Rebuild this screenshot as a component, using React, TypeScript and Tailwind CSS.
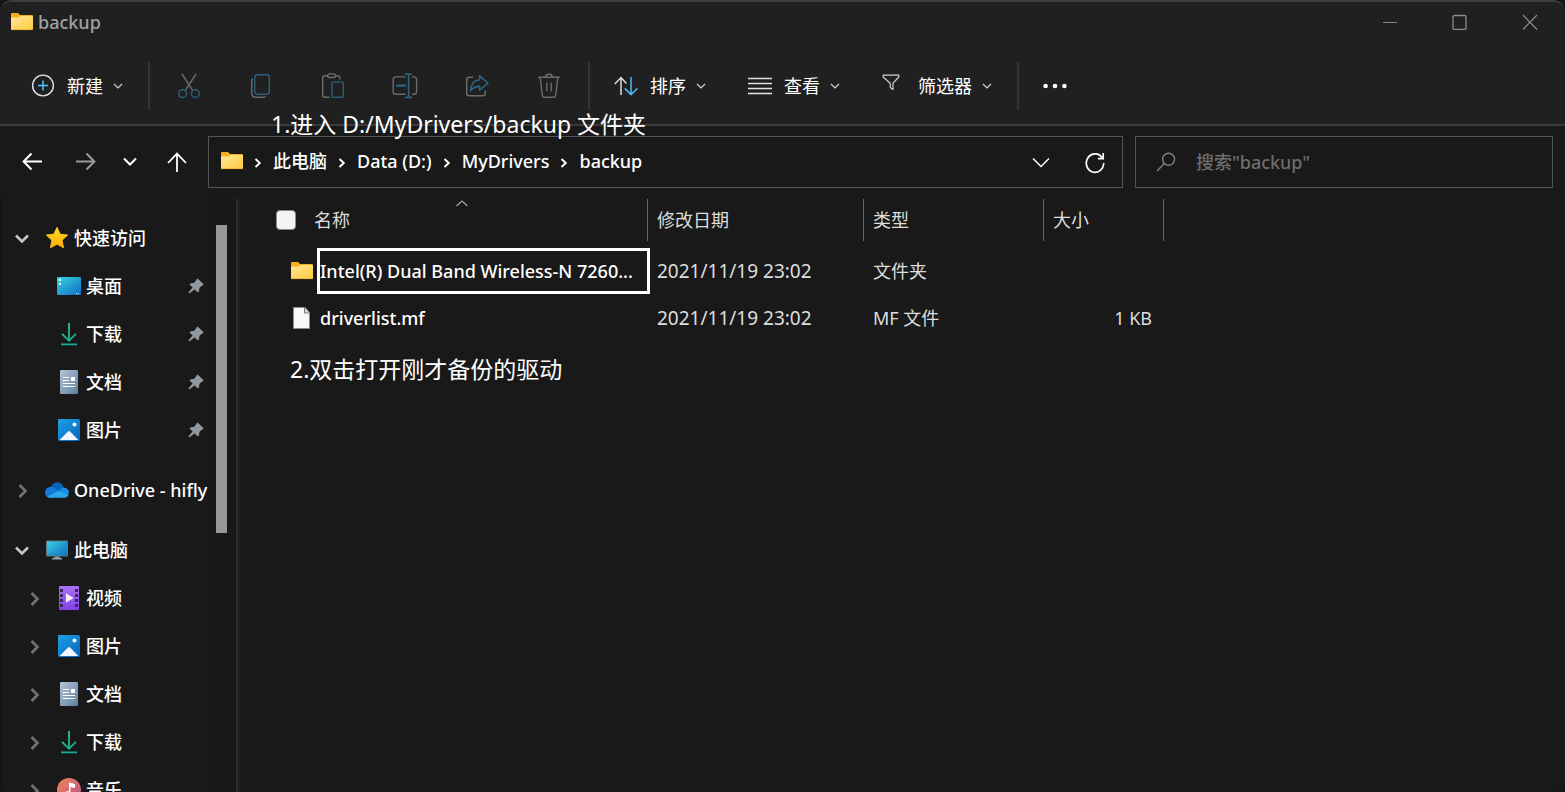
import type { ReactNode } from "react";

type IconProps = { className?: string };

function Folder({ className = "" }: IconProps) {
  return (
    <svg width="22" height="18" viewBox="0 0 22 18" className={`shrink-0 ${className}`} aria-hidden="true">
      <defs>
        <linearGradient id="folder" x1="0" y1="0" x2="1" y2="1">
          <stop offset="0" stopColor="#ffe69c" />
          <stop offset="1" stopColor="#ffcb3c" />
        </linearGradient>
      </defs>
      <path d="M0 .8Q0 0 .9 0H6.6Q7.2 0 7.6 .5L9 2H21Q22 2 22 3V8H0Z" fill="#f5b01a" />
      <path d="M0 4.4H7.4L9.4 3H22V16Q22 17 21 17H1Q0 17 0 16Z" fill="url(#folder)" />
      <path d="M.3 16.6H21.7" stroke="#eeb434" strokeWidth="1" />
    </svg>
  );
}

function PageFile() {
  return (
    <svg width="22" height="24" viewBox="0 0 22 24" className="shrink-0" aria-hidden="true">
      <path d="M2.5 1.5H14L18.5 6.5V22.5H2.5Z" fill="#f8f8f8" stroke="#8a8a8a" />
      <path d="M13.5 1.5V7H18.5" fill="#dcdcdc" stroke="#777" />
    </svg>
  );
}

function MiniChevron() {
  return (
    <svg width="10" height="8" viewBox="0 0 10 8" fill="none" stroke="#d0d0d0" strokeWidth="1.2" aria-hidden="true">
      <path d="M1 2L5 6L9 2" />
    </svg>
  );
}

function PlusCircle() {
  return (
    <svg width="24" height="24" viewBox="0 0 24 24" fill="none" aria-hidden="true">
      <circle cx="12" cy="11.5" r="10.4" stroke="#e0e0e0" strokeWidth="1.4" />
      <path d="M12 6.5V16.5M7 11.5H17" stroke="#4cc2ff" strokeWidth="1.5" />
    </svg>
  );
}

function Scissors() {
  return (
    <svg width="26" height="26" viewBox="0 0 26 26" fill="none" strokeWidth="1.4" aria-hidden="true">
      <path d="M6 1L16.6 17.4M20 1L9.4 17.4" stroke="#6c6c6c" />
      <circle cx="6.6" cy="20.6" r="3.9" stroke="#2d5f78" />
      <circle cx="19.4" cy="20.6" r="3.9" stroke="#2d5f78" />
    </svg>
  );
}

function CopyIcon() {
  return (
    <svg width="26" height="26" viewBox="0 0 26 26" fill="none" strokeWidth="1.4" aria-hidden="true">
      <path d="M4.7 5.5Q3.7 6.5 3.7 8V20Q3.7 24.3 8 24.3H15Q17 24.3 17.8 23.4" stroke="#6c6c6c" />
      <rect x="6.7" y="1.7" width="14.6" height="19.6" rx="2.6" stroke="#2d5f78" />
    </svg>
  );
}

function PasteIcon() {
  return (
    <svg width="26" height="26" viewBox="0 0 26 26" fill="none" strokeWidth="1.4" aria-hidden="true">
      <path d="M8 2.7H5Q2.7 2.7 2.7 5V22Q2.7 24.3 5 24.3H9.5M15 2.7H17.5Q19.8 2.7 19.8 5V6.5" stroke="#6c6c6c" />
      <rect x="7.7" y=".9" width="7.8" height="3.6" rx="1.8" stroke="#6c6c6c" />
      <rect x="11.9" y="8.9" width="11.4" height="15.4" rx="1.8" stroke="#2d5f78" />
    </svg>
  );
}

function RenameIcon() {
  return (
    <svg width="26" height="26" viewBox="0 0 26 26" fill="none" strokeWidth="1.4" aria-hidden="true">
      <path d="M13.5 3.9H4Q1.2 3.9 1.2 6.7V18.5Q1.2 21.3 4 21.3H13.5M20 3.9H21.8Q24.6 3.9 24.6 6.7V18.5Q24.6 21.3 21.8 21.3H20" stroke="#6c6c6c" />
      <path d="M4.2 12.6H13.8" stroke="#2d6684" strokeWidth="2.4" />
      <path d="M13 1.2H20M13 24.4H20M16.6 1.2V24.4" stroke="#2d6684" strokeWidth="1.6" />
    </svg>
  );
}

function ShareIcon() {
  return (
    <svg width="26" height="26" viewBox="0 0 26 26" fill="none" strokeWidth="1.4" strokeLinejoin="round" aria-hidden="true">
      <path d="M9 4.2H5.2Q2.7 4.2 2.7 6.7V20.3Q2.7 22.8 5.2 22.8H18.8Q21.3 22.8 21.3 20.3V17.5" stroke="#6c6c6c" />
      <path d="M15.6 2.8L24 10L15.6 17.2V13.4Q10.2 13.2 6.6 17.8Q7.2 7.4 15.6 6.8Z" stroke="#2d6684" strokeWidth="1.6" />
    </svg>
  );
}

function TrashIcon() {
  return (
    <svg width="26" height="26" viewBox="0 0 26 26" fill="none" stroke="#6c6c6c" strokeWidth="1.4" aria-hidden="true">
      <path d="M2.2 4.2H23.8M9.6 4Q9.8 1.2 13 1.2Q16.2 1.2 16.4 4M4.2 4.4L6.2 22Q6.5 24.3 8.8 24.3H17.2Q19.5 24.3 19.8 22L21.8 4.4M10.8 9.5V18.5M15.2 9.5V18.5" />
    </svg>
  );
}

function SortIcon() {
  return (
    <svg width="24" height="24" viewBox="0 0 24 24" fill="none" strokeWidth="1.5" aria-hidden="true">
      <path d="M7 21V4M.8 10L7 3.6L12.4 9.4" stroke="#dcdcdc" />
      <path d="M17 3V20M10.8 14.4L17 20.6L23.4 14.4" stroke="#4cb8f0" />
    </svg>
  );
}

function LinesIcon() {
  return (
    <svg width="24" height="24" viewBox="0 0 24 24" stroke="#e2e2e2" strokeWidth="1.3" aria-hidden="true">
      <path d="M0 4.5H24M0 9.5H24M0 14.5H24M0 19.5H24" />
    </svg>
  );
}

function FunnelIcon() {
  return (
    <svg width="18" height="24" viewBox="0 0 18 24" fill="none" stroke="#cfcfcf" strokeWidth="1.2" strokeLinejoin="round" aria-hidden="true">
      <path d="M1.2 1.2H16.8V3L11 9.2V15.4L8.2 13.4V9.2L1.2 3Z" />
    </svg>
  );
}

function DesktopIcon() {
  return (
    <svg width="24" height="18" viewBox="0 0 24 18" aria-hidden="true">
      <defs>
        <linearGradient id="screen" x1="0" y1="0" x2="1" y2="1">
          <stop offset="0" stopColor="#3ad3e0" />
          <stop offset="1" stopColor="#0f6cc4" />
        </linearGradient>
      </defs>
      <rect width="24" height="18" rx="1.2" fill="url(#screen)" />
      <path d="M2 2H4V4H2ZM2 6H4V8H2Z" fill="#fff" />
      <path d="M19 16H20V17H19ZM21 16H22V17H21Z" fill="#cfe8ff" />
    </svg>
  );
}

function DownloadIcon() {
  return (
    <svg width="18" height="24" viewBox="0 0 18 24" fill="none" strokeWidth="1.8" aria-hidden="true">
      <defs>
        <linearGradient id="down" gradientUnits="userSpaceOnUse" x1="2" y1="1" x2="16" y2="22">
          <stop offset="0" stopColor="#35d07f" />
          <stop offset="1" stopColor="#18a2a0" />
        </linearGradient>
      </defs>
      <path d="M9.01 1L9 18.5M2 11.8L9 18.8L16 11.8M1 22.4L17 22.41" stroke="url(#down)" />
    </svg>
  );
}

function DocumentIcon() {
  return (
    <svg width="18" height="24" viewBox="0 0 18 24" aria-hidden="true">
      <defs>
        <linearGradient id="doc" x1="0" y1="0" x2="1" y2="1">
          <stop offset="0" stopColor="#b4c6d6" />
          <stop offset="1" stopColor="#5f7d9e" />
        </linearGradient>
      </defs>
      <rect width="18" height="24" rx="1.2" fill="url(#doc)" />
      <path d="M3 7.5H9M3 10.5H9M3 13.5H15M3 16.5H15" stroke="#fff" />
      <rect x="11" y="7" width="4" height="4" fill="#fff" />
    </svg>
  );
}

function PictureIcon() {
  return (
    <svg width="22" height="22" viewBox="0 0 22 22" aria-hidden="true">
      <defs>
        <linearGradient id="pic" x1="0" y1="0" x2="1" y2="1">
          <stop offset="0" stopColor="#1ea0e6" />
          <stop offset="1" stopColor="#0a64b8" />
        </linearGradient>
      </defs>
      <rect width="22" height="22" rx="1.4" fill="url(#pic)" />
      <path d="M1.6 21L10 12.4Q11 11.6 12 12.4L20.4 21Z" fill="#eef6ff" />
      <circle cx="16.5" cy="5.5" r="2" fill="#fff" />
    </svg>
  );
}

function VideoIcon() {
  return (
    <svg width="20" height="24" viewBox="0 0 20 24" aria-hidden="true">
      <defs>
        <linearGradient id="vid" x1="0" y1="0" x2="0" y2="1">
          <stop offset="0" stopColor="#a972f4" />
          <stop offset="1" stopColor="#8240e6" />
        </linearGradient>
      </defs>
      <rect width="20" height="24" rx="1.2" fill="url(#vid)" />
      <path d="M1 3H4V6H1ZM1 8H4V11H1ZM1 13H4V16H1ZM1 18H4V21H1ZM16 3H19V6H16ZM16 8H19V11H16ZM16 13H19V16H16ZM16 18H19V21H16Z" fill="#3b2560" />
      <path d="M7 7.2L14.6 12L7 16.8Z" fill="#f4f0fa" />
    </svg>
  );
}

function MusicIcon() {
  return (
    <svg width="24" height="24" viewBox="0 0 24 24" aria-hidden="true">
      <defs>
        <linearGradient id="mus" x1="0" y1="0" x2="1" y2="1">
          <stop offset="0" stopColor="#f0894c" />
          <stop offset="1" stopColor="#b84e98" />
        </linearGradient>
      </defs>
      <circle cx="12" cy="12" r="12" fill="url(#mus)" />
      <path d="M12 4.5L18 6V10L13.4 9V16H12Z" fill="#fff" />
      <circle cx="10.6" cy="16" r="2.8" fill="#fff" />
    </svg>
  );
}

function StarIcon() {
  return (
    <svg width="24" height="24" viewBox="0 0 24 24" aria-hidden="true">
      <defs>
        <linearGradient id="star" x1="0" y1="0" x2="0" y2="1">
          <stop offset="0" stopColor="#ffda20" />
          <stop offset="1" stopColor="#ffae0c" />
        </linearGradient>
      </defs>
      <path
        d="M12 1.4L15.1 8.2L22.6 9.1L17.1 14.2L18.5 21.8L12 18.1L5.5 21.8L6.9 14.2L1.4 9.1L8.9 8.2Z"
        fill="url(#star)"
        stroke="url(#star)"
        strokeLinejoin="round"
      />
    </svg>
  );
}

function CloudIcon() {
  return (
    <svg width="24" height="16" viewBox="0 0 24 16" aria-hidden="true">
      <path d="M6 5Q8 .2 12.4 .2Q17.2 .4 18.6 5.4L14 11Z" fill="#0a63b8" />
      <path d="M5.2 15.8Q0 15.4 0 10.4Q.4 5.6 5.2 4.8Q7 4.6 8.6 5.4L16 10L6 15.8Z" fill="#1379d4" />
      <path d="M14 9.4Q16 5.4 18.6 5.4Q24 6 24 10.8L22 14Z" fill="#1b8be0" />
      <path d="M2.2 14.6L14 8.8L23.6 13Q22.6 15.8 19 15.8H5.2Q3.4 15.6 2.2 14.6Z" fill="#2aa6ee" />
    </svg>
  );
}

function ComputerIcon() {
  return (
    <svg width="22" height="20" viewBox="0 0 22 20" aria-hidden="true">
      <rect x="0" y=".5" width="22" height="16" rx="1" fill="#5e7886" />
      <rect x="1" y="1.5" width="20" height="14" fill="url(#screen)" />
      <path d="M8.5 16.5H13.5V18H16V19.4H6V18H8.5Z" fill="#93a2ab" />
    </svg>
  );
}

function PinIcon() {
  return (
    <svg width="16" height="16" viewBox="0 0 16 16" className="shrink-0" aria-hidden="true">
      <path d="M9.6 .4L15.6 6.2Q15.4 7.4 14.2 7.4L11.4 10Q11.6 13 10 14.6L6.4 11.4L1.4 15.6L.4 14.6L4.6 9.6L1.4 6.2Q3 4.6 6 5L8.4 2Q8.4 .6 9.6 .4Z" fill="#8e999f" />
    </svg>
  );
}

type NavItem = { label: string; icon: ReactNode; level: 1 | 2; state?: "open" | "closed"; pinned?: boolean };

const groups: NavItem[][] = [
  [
    { label: "快速访问", icon: <StarIcon />, level: 1, state: "open" },
    { label: "桌面", icon: <DesktopIcon />, level: 2, pinned: true },
    { label: "下载", icon: <DownloadIcon />, level: 2, pinned: true },
    { label: "文档", icon: <DocumentIcon />, level: 2, pinned: true },
    { label: "图片", icon: <PictureIcon />, level: 2, pinned: true },
  ],
  [{ label: "OneDrive - hifly", icon: <CloudIcon />, level: 1, state: "closed" }],
  [
    { label: "此电脑", icon: <ComputerIcon />, level: 1, state: "open" },
    { label: "视频", icon: <VideoIcon />, level: 2, state: "closed" },
    { label: "图片", icon: <PictureIcon />, level: 2, state: "closed" },
    { label: "文档", icon: <DocumentIcon />, level: 2, state: "closed" },
    { label: "下载", icon: <DownloadIcon />, level: 2, state: "closed" },
    { label: "音乐", icon: <MusicIcon />, level: 2, state: "closed" },
  ],
];

function NavRow({ label, icon, level, state, pinned }: NavItem) {
  return (
    <li>
      <button type="button" className={`flex h-12 w-full items-center pr-1 text-left ${level === 1 ? "pl-3" : "pl-6"}`}>
        <span className="flex w-5 shrink-0 justify-center">
          {state === "open" && (
            <svg width="16" height="16" viewBox="0 0 16 16" fill="none" stroke="#c8c8c8" strokeWidth="2.6" aria-hidden="true">
              <path d="M2 5.5L8 11.5L14 5.5" />
            </svg>
          )}
          {state === "closed" && (
            <svg width="16" height="16" viewBox="0 0 16 16" fill="none" stroke="#747474" strokeWidth="2.6" aria-hidden="true">
              <path d="M5.5 3L11.5 9L5.5 15" />
            </svg>
          )}
        </span>
        <span className="ml-[13px] flex w-6 shrink-0 justify-center">{icon}</span>
        <span className="ml-[5px] flex-1 whitespace-nowrap">{label}</span>
        {pinned && <PinIcon />}
      </button>
    </li>
  );
}

const fileActions = [
  { label: "剪切", icon: <Scissors /> },
  { label: "复制", icon: <CopyIcon /> },
  { label: "粘贴", icon: <PasteIcon /> },
  { label: "重命名", icon: <RenameIcon /> },
  { label: "共享", icon: <ShareIcon /> },
  { label: "删除", icon: <TrashIcon /> },
];

function MenuButton({ label, icon }: { label: string; icon: ReactNode }) {
  return (
    <button type="button" className="flex h-12 items-center gap-3 whitespace-nowrap">
      {icon}
      <span className="flex items-center gap-2.5">
        {label}
        <MiniChevron />
      </span>
    </button>
  );
}

function Divider() {
  return <div className="h-12 w-0.5 bg-[#333333]" />;
}

const crumbs = ["此电脑", "Data (D:)", "MyDrivers", "backup"];

const columns = [
  { label: "修改日期", width: "w-[216px]" },
  { label: "类型", width: "w-[180px]" },
  { label: "大小", width: "w-[120px]" },
];

const files = [
  { name: "Intel(R) Dual Band Wireless-N 7260...", icon: <Folder />, date: "2021/11/19 23:02", type: "文件夹", size: "" },
  { name: "driverlist.mf", icon: <PageFile />, date: "2021/11/19 23:02", type: "MF 文件", size: "1 KB" },
];

export default function App() {
  return (
    <div className="h-screen bg-[#161616]">
      <div className="relative flex h-full flex-col overflow-hidden rounded-xl border-t-2 border-[#3d3d3d] bg-[#191919] font-['Noto_Sans','Noto_Sans_CJK_SC',sans-serif] text-lg leading-6 text-white">
        <header className="border-b-2 border-[#3a3a3a] bg-[#202020]">
          <div className="flex h-10 items-center pl-[11px]">
            <Folder />
            <h1 className="ml-[5px] flex-1 font-medium text-[#a0a0a0]">backup</h1>
            <div className="flex text-[#8a8a8a]">
              <button type="button" aria-label="最小化" className="flex h-10 w-[70px] items-center justify-center">
                <svg width="16" height="16" viewBox="0 0 16 16" stroke="currentColor"><path d="M1 8.5H15" /></svg>
              </button>
              <button type="button" aria-label="最大化" className="flex h-10 w-[70px] items-center justify-center">
                <svg width="16" height="16" viewBox="0 0 16 16" fill="none" stroke="currentColor" strokeWidth="1.3"><rect x="1" y="1.5" width="13" height="14" rx="1.2" /></svg>
              </button>
              <button type="button" aria-label="关闭" className="flex h-10 w-[70px] items-center justify-center">
                <svg width="16" height="16" viewBox="0 0 16 16" stroke="currentColor" strokeWidth="1.2"><path d="M1 1L15 15.5M15 1L1 15.5" /></svg>
              </button>
            </div>
          </div>
          <div className="flex h-[82px] items-center pl-[31px] pt-1.5">
            <MenuButton label="新建" icon={<PlusCircle />} />
            <div className="ml-[25px]"><Divider /></div>
            <div className="flex px-[3px]">
              {fileActions.map((a) => (
                <button key={a.label} type="button" disabled aria-label={a.label} className="flex h-12 w-[72px] items-center justify-center">
                  {a.icon}
                </button>
              ))}
            </div>
            <Divider />
            <div className="ml-6 flex items-center gap-[42px]">
              <MenuButton label="排序" icon={<SortIcon />} />
              <MenuButton label="查看" icon={<LinesIcon />} />
              <MenuButton label="筛选器" icon={<span className="mr-1.5"><FunnelIcon /></span>} />
            </div>
            <div className="ml-[25px]"><Divider /></div>
            <button type="button" aria-label="更多" className="flex h-12 w-[72px] items-center justify-center">
              <svg width="24" height="6" viewBox="0 0 24 6" fill="#fff"><circle cx="2.6" cy="3" r="2.3" /><circle cx="12" cy="3" r="2.3" /><circle cx="21.4" cy="3" r="2.3" /></svg>
            </button>
          </div>
        </header>

        <div className="flex items-center gap-3 pb-[11px] pr-3 pt-2.5">
          <div className="flex w-[196px] shrink-0 items-center pl-[21px]">
            <button type="button" aria-label="后退">
              <svg width="24" height="24" viewBox="0 0 24 24" fill="none" stroke="#fff" strokeWidth="2"><path d="M21 11.5H3M10.5 3.5L2.6 11.5L10.5 19.5" /></svg>
            </button>
            <button type="button" aria-label="前进" className="ml-7">
              <svg width="24" height="24" viewBox="0 0 24 24" fill="none" stroke="#9a9a9a" strokeWidth="2"><path d="M3 11.5H21M13.5 3.5L21.4 11.5L13.5 19.5" /></svg>
            </button>
            <button type="button" aria-label="最近浏览的位置" className="ml-[25px]">
              <svg width="16" height="24" viewBox="0 0 16 24" fill="none" stroke="#fff" strokeWidth="2"><path d="M2 8.5L8 14.5L14 8.5" /></svg>
            </button>
            <button type="button" aria-label="上移" className="ml-[27px]">
              <svg width="24" height="24" viewBox="0 0 24 24" fill="none" stroke="#fff" strokeWidth="1.8"><path d="M12 22V4M3 13L12 3.6L21 13" /></svg>
            </button>
          </div>
          <nav aria-label="路径" className="flex h-[52px] min-w-0 flex-1 items-center border border-[#545454] pl-3 pr-[15px]">
            <Folder className="mb-0.5" />
            <ol className="flex flex-1 items-center whitespace-nowrap pb-0.5 font-medium">
              {crumbs.map((c) => (
                <li key={c} className="flex items-center">
                  <svg width="30" height="12" viewBox="0 0 30 12" fill="none" stroke="#fff" strokeWidth="1.9" className="mt-1" aria-hidden="true"><path d="M12.5 2L16.8 6L12.5 10" /></svg>
                  <a href="#">{c}</a>
                </li>
              ))}
            </ol>
            <button type="button" aria-label="历史记录" className="mr-[33px]">
              <svg width="18" height="24" viewBox="0 0 18 24" fill="none" stroke="#fff" strokeWidth="1.5"><path d="M1 8.5L9 16.5L17 8.5" /></svg>
            </button>
            <button type="button" aria-label="刷新">
              <svg width="24" height="24" viewBox="0 0 24 24" fill="none" stroke="#fff" strokeWidth="1.7"><path d="M19.8 9A8.7 9.2 0 1 0 20.7 13M20.2 3V8.6H15" /></svg>
            </button>
          </nav>
          <label className="flex h-[52px] w-[418px] items-center border border-[#545454] pl-5">
            <svg width="20" height="20" viewBox="0 0 20 20" fill="none" stroke="#808080" strokeWidth="1.4" aria-hidden="true"><circle cx="12.6" cy="7.2" r="6" /><path d="M8.4 11.6L1 19" /></svg>
            <input type="search" aria-label="搜索" placeholder={'搜索"backup"'} className="ml-5 w-full min-w-0 flex-1 bg-transparent font-medium outline-none placeholder:text-[#6e6e6e]" />
          </label>
        </div>

        <div className="flex min-h-0 flex-1">
          <aside className="flex w-60 shrink-0 overflow-hidden">
            <div className="flex w-52 flex-col gap-3 overflow-hidden border-l-2 border-[#151515] pt-[15px] font-medium">
              {groups.map((items, i) => (
                <ul key={i} className="-ml-0.5">
                  {items.map((item) => (
                    <NavRow key={item.label} {...item} />
                  ))}
                </ul>
              ))}
            </div>
            <div className="flex-1 bg-[#181818] pl-2 pt-[26px]">
              <div className="h-[308px] w-[11px] bg-[#979797]" />
            </div>
            <div className="w-1 border-l-2 border-[#2c2c2c] bg-[#1e1e1e]" />
          </aside>

          <main className="relative min-w-0 flex-1">
            <table className="w-[924px] table-fixed border-collapse text-[#dedede]">
              <thead>
                <tr>
                  <th className="w-[408px] p-0 text-left align-top font-normal">
                    <div className="relative flex h-[42px] items-center border-r border-[#666666] pl-9">
                      <input type="checkbox" aria-label="全选" className="size-5 appearance-none rounded border border-[#8c8c8c] bg-[#f3f3f3]" />
                      <span className="ml-[18px]">名称</span>
                      <svg width="14" height="8" viewBox="0 0 14 8" fill="none" stroke="#a8a8a8" strokeWidth="1.2" className="absolute left-[215px] top-0" aria-hidden="true"><path d="M1.5 7L7 2L12.5 7" /></svg>
                    </div>
                  </th>
                  {columns.map((c) => (
                    <th key={c.label} className={`h-12 p-0 text-left align-top font-normal ${c.width}`}>
                      <div className="flex h-[42px] items-center border-r border-[#666666] pl-[9px]">{c.label}</div>
                    </th>
                  ))}
                </tr>
              </thead>
              <tbody>
                {files.map((f) => (
                  <tr key={f.name} className="h-[47px]">
                    <td className="whitespace-nowrap p-0 pl-[51px] font-medium text-white">
                      <div className="flex items-center gap-[7px]">
                        {f.icon}
                        {f.name}
                      </div>
                    </td>
                    <td className="p-0 pl-[9px] text-[19px]">{f.date}</td>
                    <td className="p-0 pl-[9px]">{f.type}</td>
                    <td className="p-0 pr-3 text-right">{f.size}</td>
                  </tr>
                ))}
              </tbody>
            </table>
            <div className="pointer-events-none absolute left-[77px] top-[49px] h-[46px] w-[333px] border-[3px] border-white" />
            <p className="absolute left-[50px] top-[154px] whitespace-nowrap text-[23px] leading-8">2.双击打开刚才备份的驱动</p>
          </main>
        </div>

        <p className="pointer-events-none absolute left-[271px] top-[106px] whitespace-nowrap text-[23px] leading-8">
          1.进入 D:/MyDrivers/backup 文件夹
        </p>
      </div>
    </div>
  );
}
